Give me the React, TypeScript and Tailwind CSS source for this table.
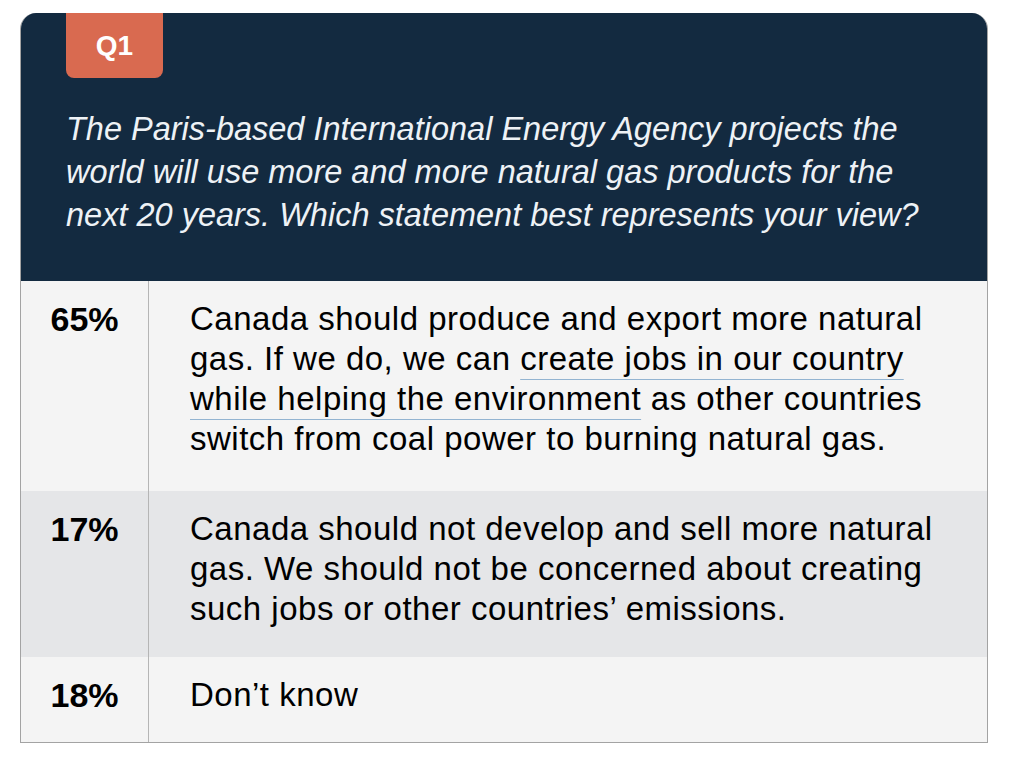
const rows = [
  {
    pct: "65%",
    bg: "bg-[#f4f4f4]",
    body: (
      <>
        Canada should produce and export more natural gas. If we do, we can{" "}
        <span className="underline decoration-[#93b4d1] decoration-1 underline-offset-[9px]">
          create jobs in our country while helping the environment
        </span>{" "}
        as other countries switch from coal power to burning natural gas.
      </>
    ),
    pb: "pb-[32px]",
  },
  {
    pct: "17%",
    bg: "bg-[#e5e6e8]",
    body: (
      <>
        Canada should not develop and sell more natural gas. We should not be
        concerned about creating such jobs or other countries’ emissions.
      </>
    ),
    pb: "pb-[28px]",
  },
  {
    pct: "18%",
    bg: "bg-[#f4f4f4]",
    body: <>Don’t know</>,
    pb: "pb-[27px]",
  },
];

export default function App() {
  return (
    <main
      className="min-h-[766px] w-[1012px] bg-white pt-[13px] pl-[20px]"
      style={{ fontFamily: '"Liberation Sans", Arial, sans-serif' }}
    >
      <div className="w-[968px] overflow-hidden rounded-t-[16px] border-x border-b border-[#a3a3a3]">
        <div className="h-[268px] bg-[#132a40] pl-[45px]">
          <div className="flex h-[65px] w-[97px] items-center justify-center rounded-b-[8px] bg-[#d96a50] text-[28px] font-bold text-white">
            Q1
          </div>
          <p className="mt-[30px] pr-[40px] text-[32.5px] leading-[43px] text-[#eef2f6] italic">
            The Paris-based International Energy Agency projects the world will
            use more and more natural gas products for the next 20 years. Which
            statement best represents your view?
          </p>
        </div>
        {rows.map((r) => (
          <div key={r.pct} className={`flex ${r.bg}`}>
            <div className={`w-[128px] shrink-0 border-r border-[#b5b5b5] pt-[18px] text-center text-[34px] leading-[40px] font-bold text-black ${r.pb}`}>
              {r.pct}
            </div>
            <div className={`flex-1 pt-[18px] pr-[40px] pl-[41px] text-[33px] leading-[40px] tracking-[0.5px] text-black ${r.pb}`}>
              {r.body}
            </div>
          </div>
        ))}
      </div>
    </main>
  );
}
